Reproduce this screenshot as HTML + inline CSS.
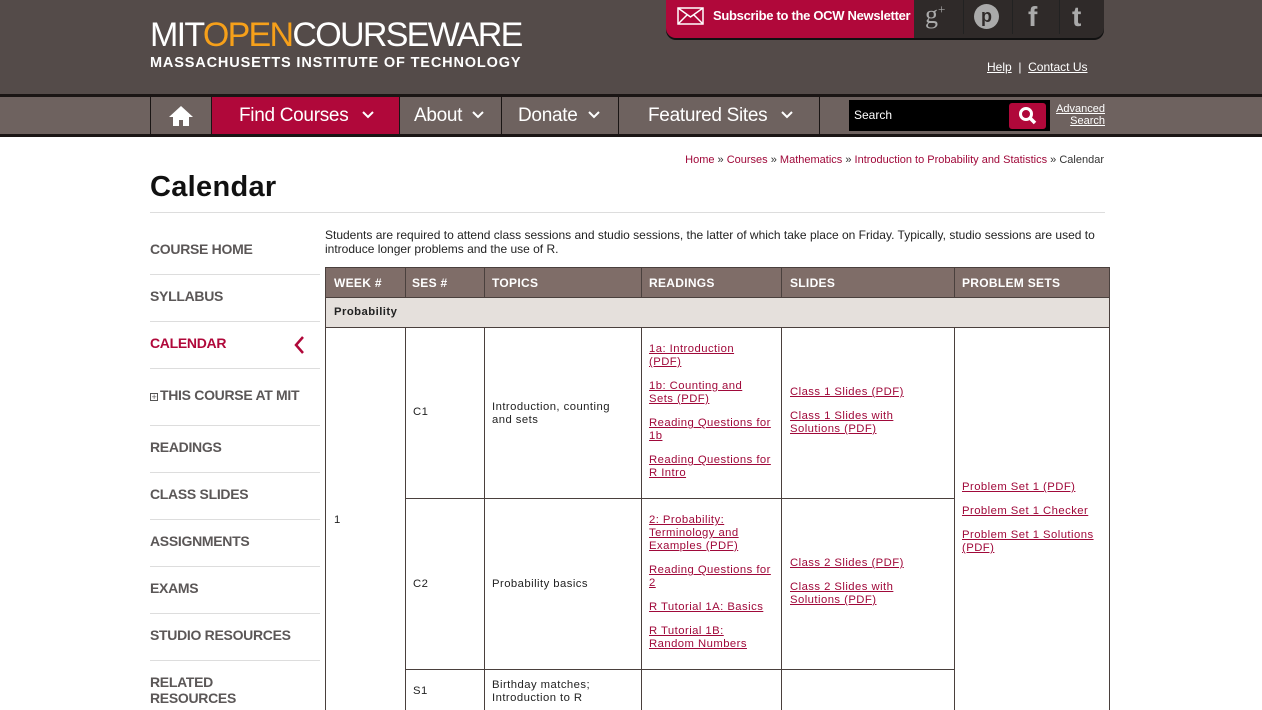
<!DOCTYPE html>
<html><head><meta charset="utf-8"><style>
*{margin:0;padding:0;box-sizing:border-box}
body{width:1262px;height:710px;overflow:hidden;background:#fff;font-family:"Liberation Sans",sans-serif;position:relative}
.a{position:absolute}
#hdr{left:0;top:0;width:1262px;height:94px;background:#544b49}
#nav{left:0;top:94px;width:1262px;height:43px;background:#6e625f;border-top:3px solid #1a1514;border-bottom:3px solid #1a1514}
.ni{position:absolute;top:0;height:37px;color:#fff;font-size:19px;line-height:37px;border-left:1px solid #1a1514;padding-left:16px;letter-spacing:-0.3px}
.ni svg{position:absolute;top:14px}
.side{position:absolute;left:150px;width:170px;font-weight:bold;font-size:14px;color:#5b5757;letter-spacing:-0.3px}
.sep{position:absolute;left:150px;width:170px;height:1px;background:#ddd}
.vl{position:absolute;width:1px;background:#4a403d}
.hl{position:absolute;height:1px;background:#4a403d}
.t{position:absolute;font-size:11.3px;line-height:13px;color:#222;letter-spacing:0.45px;white-space:nowrap}
.l{color:#a0093a;text-decoration:underline}
.th{position:absolute;top:276px;color:#fff;font-weight:bold;font-size:12px;letter-spacing:0.3px}
</style></head><body>
<div id="hdr" class="a"></div>
<div class="a" style="left:150px;top:16px;font-size:34px;color:#fff;letter-spacing:-1.7px;line-height:38px">MIT<span style="color:#f6a01a">OPEN</span>COURSEWARE</div>
<div class="a" style="left:150px;top:55px;font-size:14.5px;font-weight:bold;color:#fff;letter-spacing:0.85px">MASSACHUSETTS INSTITUTE OF TECHNOLOGY</div>
<div class="a" style="left:666px;top:0;width:438px;height:38px;background:#2f2a29;border-radius:0 0 10px 10px;box-shadow:0 2px 0 #111"></div>
<div class="a" style="left:666px;top:0;width:248px;height:38px;background:#b0083a;border-radius:0 0 0 10px"></div>
<svg class="a" style="left:677px;top:7px" width="27" height="18"><rect x="1" y="1" width="25" height="16" fill="none" stroke="#fff" stroke-width="1.5"/><path d="M1 1L13.5 10L26 1M1 17L10 8M26 17L17 8" stroke="#fff" stroke-width="1.5" fill="none"/></svg>
<div class="a" style="left:713px;top:8px;color:#fff;font-weight:bold;font-size:13px;letter-spacing:-0.3px">Subscribe to the OCW Newsletter</div>
<div class="a" style="left:963px;top:0;width:1px;height:34px;background:#222"></div>
<div class="a" style="left:1012px;top:0;width:1px;height:34px;background:#222"></div>
<div class="a" style="left:1059px;top:0;width:1px;height:34px;background:#222"></div>
<div class="a" style="left:925px;top:0;color:#aaa;font-size:26px;font-family:'Liberation Serif',serif">g<sup style="font-size:13px">+</sup></div>
<div class="a" style="left:974px;top:4px;width:25px;height:25px;border-radius:50%;background:#aaa;color:#2f2a29;font-weight:bold;font-size:18px;text-align:center;line-height:25px">p</div>
<div class="a" style="left:1028px;top:1px;color:#aaa;font-weight:bold;font-size:28px">f</div>
<div class="a" style="left:1072px;top:1px;color:#aaa;font-weight:bold;font-size:28px">t</div>
<div class="a" style="left:987px;top:60px;color:#fff;font-size:12px"><u>Help</u> &nbsp;| &nbsp;<u>Contact Us</u></div>
<div id="nav" class="a"></div>
<div class="ni" style="left:150px;top:97px;width:62px;padding:0"><svg style="left:17px;top:8px" width="26" height="22"><path d="M13 1L1 12h4v9h6v-6h4v6h6v-9h4z" fill="#fff"/></svg></div>
<div class="ni" style="left:211px;top:97px;width:188px;background:#b0083a;padding-left:27px">Find Courses<svg style="left:150px" width="12" height="8"><path d="M1 1l5 5 5-5" stroke="#fff" stroke-width="2" fill="none"/></svg></div>
<div class="ni" style="left:399px;top:97px;width:102px;padding-left:14px">About<svg style="left:72px" width="12" height="8"><path d="M1 1l5 5 5-5" stroke="#fff" stroke-width="2" fill="none"/></svg></div>
<div class="ni" style="left:501px;top:97px;width:117px">Donate<svg style="left:86px" width="12" height="8"><path d="M1 1l5 5 5-5" stroke="#fff" stroke-width="2" fill="none"/></svg></div>
<div class="ni" style="left:618px;top:97px;width:202px;padding-left:29px;border-right:1px solid #1a1514">Featured Sites<svg style="left:162px" width="12" height="8"><path d="M1 1l5 5 5-5" stroke="#fff" stroke-width="2" fill="none"/></svg></div>
<div class="a" style="left:849px;top:100px;width:201px;height:31px;background:#000"></div>
<div class="a" style="left:854px;top:108px;color:#fff;font-size:12px">Search</div>
<div class="a" style="left:1009px;top:103px;width:37px;height:26px;background:#b0083a;border-radius:3px"></div>
<svg class="a" style="left:1017px;top:105px" width="22" height="22"><circle cx="9" cy="9" r="5.5" stroke="#fff" stroke-width="3" fill="none"/><path d="M13 13l5 5" stroke="#fff" stroke-width="3.5"/></svg>
<div class="a" style="left:1050px;top:103px;width:55px;text-align:right;color:#fff;font-size:11px;line-height:12px;text-decoration:underline">Advanced<br>Search</div>

<div class="a" style="right:158px;top:154px;font-size:11px;color:#333"><span style="color:#a0093a">Home</span> » <span style="color:#a0093a">Courses</span> » <span style="color:#a0093a">Mathematics</span> » <span style="color:#a0093a">Introduction to Probability and Statistics</span> » Calendar</div>
<div class="a" style="left:150px;top:171px;font-size:29px;font-weight:bold;color:#111;letter-spacing:0.3px">Calendar</div>
<div class="a" style="left:150px;top:212px;width:955px;height:1px;background:#ddd"></div>

<div class="side" style="top:241px">COURSE HOME</div><div class="sep" style="top:274px"></div>
<div class="side" style="top:288px">SYLLABUS</div><div class="sep" style="top:321px"></div>
<div class="side" style="top:335px;color:#b0083a">CALENDAR</div>
<svg class="a" style="left:293px;top:335px" width="12" height="20"><path d="M10 2L3 10l7 8" stroke="#b0083a" stroke-width="2.5" fill="none"/></svg>
<div class="sep" style="top:368px"></div>
<div class="side" style="top:387px"><span style="font-size:9px;font-weight:normal;border:1px solid #555;display:inline-block;width:8px;height:8px;line-height:6px;text-align:center;margin-right:2px">+</span>THIS COURSE AT MIT</div><div class="sep" style="top:425px"></div>
<div class="side" style="top:439px">READINGS</div><div class="sep" style="top:472px"></div>
<div class="side" style="top:486px">CLASS SLIDES</div><div class="sep" style="top:519px"></div>
<div class="side" style="top:533px">ASSIGNMENTS</div><div class="sep" style="top:566px"></div>
<div class="side" style="top:580px">EXAMS</div><div class="sep" style="top:613px"></div>
<div class="side" style="top:627px">STUDIO RESOURCES</div><div class="sep" style="top:660px"></div>
<div class="side" style="top:674px;line-height:16px">RELATED<br>RESOURCES</div>

<div class="a" style="left:325px;top:228px;width:785px;font-size:12px;line-height:14px;color:#222">Students are required to attend class sessions and studio sessions, the latter of which take place on Friday. Typically, studio sessions are used to introduce longer problems and the use of R.</div>

<div class="a" style="left:325px;top:267px;width:785px;height:30px;background:#7f6d68"></div>
<div class="a" style="left:325px;top:297px;width:785px;height:30px;background:#e5e0dc"></div>
<div class="hl" style="left:325px;top:267px;width:785px"></div>
<div class="hl" style="left:325px;top:297px;width:785px"></div>
<div class="hl" style="left:325px;top:327px;width:785px"></div>
<div class="hl" style="left:405px;top:498px;width:549px"></div>
<div class="hl" style="left:405px;top:669px;width:549px"></div>
<div class="vl" style="left:325px;top:267px;height:443px"></div>
<div class="vl" style="left:405px;top:267px;height:30px"></div><div class="vl" style="left:405px;top:327px;height:383px"></div>
<div class="vl" style="left:484px;top:267px;height:30px"></div><div class="vl" style="left:484px;top:327px;height:383px"></div>
<div class="vl" style="left:641px;top:267px;height:30px"></div><div class="vl" style="left:641px;top:327px;height:383px"></div>
<div class="vl" style="left:781px;top:267px;height:30px"></div><div class="vl" style="left:781px;top:327px;height:383px"></div>
<div class="vl" style="left:954px;top:267px;height:30px"></div><div class="vl" style="left:954px;top:327px;height:383px"></div>
<div class="vl" style="left:1109px;top:267px;height:443px"></div>
<div class="th" style="left:334px">WEEK #</div><div class="th" style="left:412px">SES #</div><div class="th" style="left:492px">TOPICS</div>
<div class="th" style="left:649px">READINGS</div><div class="th" style="left:790px">SLIDES</div><div class="th" style="left:962px">PROBLEM SETS</div>
<div class="t" style="left:334px;top:306px;font-weight:bold">Probability</div>

<div class="t" style="left:334px;top:514px">1</div>
<div class="t" style="left:413px;top:406px">C1</div>
<div class="t" style="left:492px;top:401px">Introduction, counting<br>and sets</div>
<div class="t" style="left:649px;top:343px"><span class="l">1a: Introduction</span><br><span class="l">(PDF)</span><div style="height:11px"></div><span class="l">1b: Counting and</span><br><span class="l">Sets (PDF)</span><div style="height:11px"></div><span class="l">Reading Questions for</span><br><span class="l">1b</span><div style="height:11px"></div><span class="l">Reading Questions for</span><br><span class="l">R Intro</span></div>
<div class="t" style="left:790px;top:386px"><span class="l">Class 1 Slides (PDF)</span><div style="height:11px"></div><span class="l">Class 1 Slides with</span><br><span class="l">Solutions (PDF)</span></div>
<div class="t" style="left:962px;top:481px"><span class="l">Problem Set 1 (PDF)</span><div style="height:11px"></div><span class="l">Problem Set 1 Checker</span><div style="height:11px"></div><span class="l">Problem Set 1 Solutions</span><br><span class="l">(PDF)</span></div>
<div class="t" style="left:413px;top:578px">C2</div>
<div class="t" style="left:492px;top:578px">Probability basics</div>
<div class="t" style="left:649px;top:514px"><span class="l">2: Probability:</span><br><span class="l">Terminology and</span><br><span class="l">Examples (PDF)</span><div style="height:11px"></div><span class="l">Reading Questions for</span><br><span class="l">2</span><div style="height:11px"></div><span class="l">R Tutorial 1A: Basics</span><div style="height:11px"></div><span class="l">R Tutorial 1B:</span><br><span class="l">Random Numbers</span></div>
<div class="t" style="left:790px;top:557px"><span class="l">Class 2 Slides (PDF)</span><div style="height:11px"></div><span class="l">Class 2 Slides with</span><br><span class="l">Solutions (PDF)</span></div>
<div class="t" style="left:413px;top:685px">S1</div>
<div class="t" style="left:492px;top:679px">Birthday matches;<br>Introduction to R</div>
</body></html>
